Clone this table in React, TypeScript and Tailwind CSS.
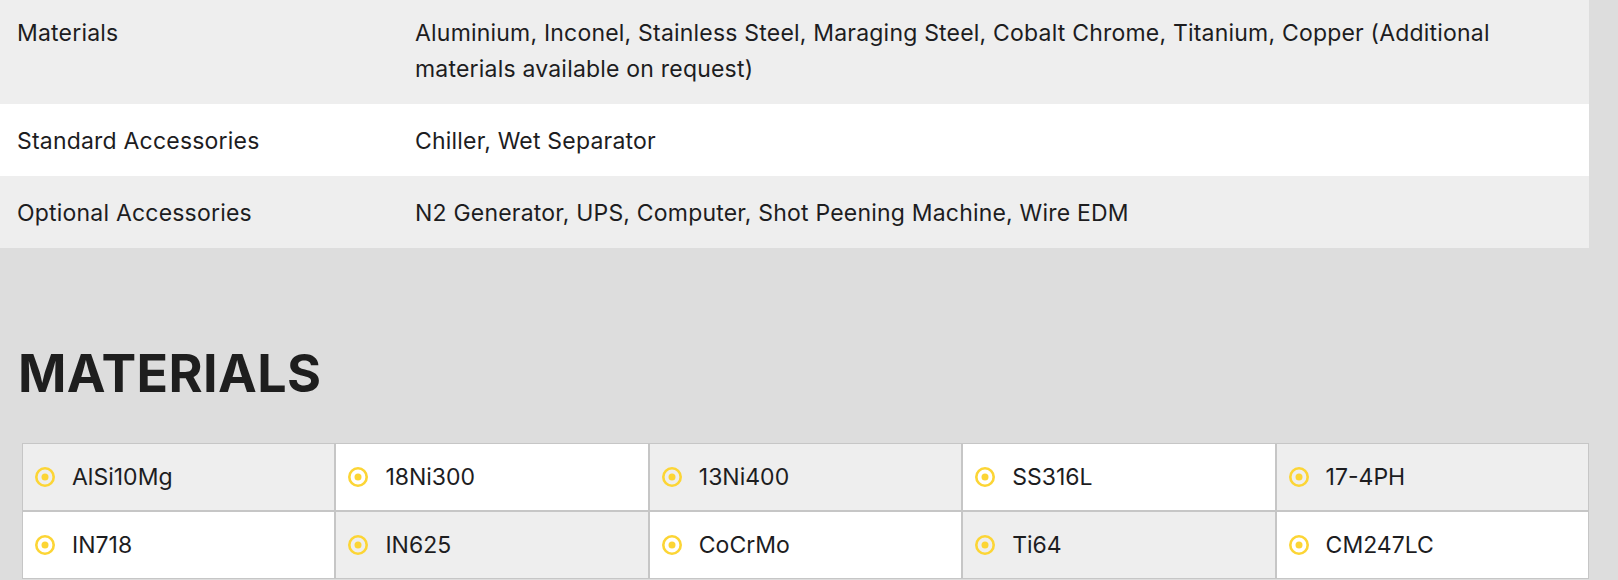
import React from "react";

const specs = [
  {
    label: "Materials",
    value:
      "Aluminium, Inconel, Stainless Steel, Maraging Steel, Cobalt Chrome, Titanium, Copper (Additional materials available on request)",
    row: "bg-[#eeeeee] h-[104px] pt-[15px]",
  },
  {
    label: "Standard Accessories",
    value: "Chiller, Wet Separator",
    row: "bg-white h-[72px] pt-[19px]",
  },
  {
    label: "Optional Accessories",
    value: "N2 Generator, UPS, Computer, Shot Peening Machine, Wire EDM",
    row: "bg-[#eeeeee] h-[72px] pt-[19px]",
  },
];

const materials = [
  "AlSi10Mg",
  "18Ni300",
  "13Ni400",
  "SS316L",
  "17-4PH",
  "IN718",
  "IN625",
  "CoCrMo",
  "Ti64",
  "CM247LC",
];

const DotCircle = () => (
  <svg width="20" height="20" viewBox="0 0 20 20" className="shrink-0">
    <circle cx="10" cy="10" r="8.7" fill="none" stroke="#fcd535" strokeWidth="2.6" />
    <circle cx="10" cy="10" r="3.5" fill="#fcd535" />
  </svg>
);

const App: React.FC = () => {
  return (
    <div className="bg-[#dddddd] h-[580px] w-full overflow-hidden font-['Inter',sans-serif] text-[#1d1d1f]">
      <div className="w-[1589px]">
        {specs.map((s) => (
          <div key={s.label} className={`flex text-[23px] leading-[36px] tracking-[0.2px] ${s.row}`}>
            <div className="w-[415px] shrink-0 pl-[17px]">{s.label}</div>
            <div className="flex-1 pr-[40px]">{s.value}</div>
          </div>
        ))}
      </div>

      <h2 className="mt-[100px] mb-[43px] pl-[18px] h-[52px] text-[52px] leading-[52px] font-bold tracking-[0.4px] text-[#1e1e1e]">
        MATERIALS
      </h2>

      <div className="ml-[22px] w-[1567px] grid grid-cols-5">
        {materials.map((m, i) => (
          <div
            key={m}
            className={`flex items-center h-[68px] pl-[12px] border border-[#c6c6c6] ${
              i % 2 === 0 ? "bg-[#eeeeee]" : "bg-white"
            }`}
          >
            <DotCircle />
            <span className="ml-[17px] text-[23px]">{m}</span>
          </div>
        ))}
      </div>
    </div>
  );
};

export default App;
